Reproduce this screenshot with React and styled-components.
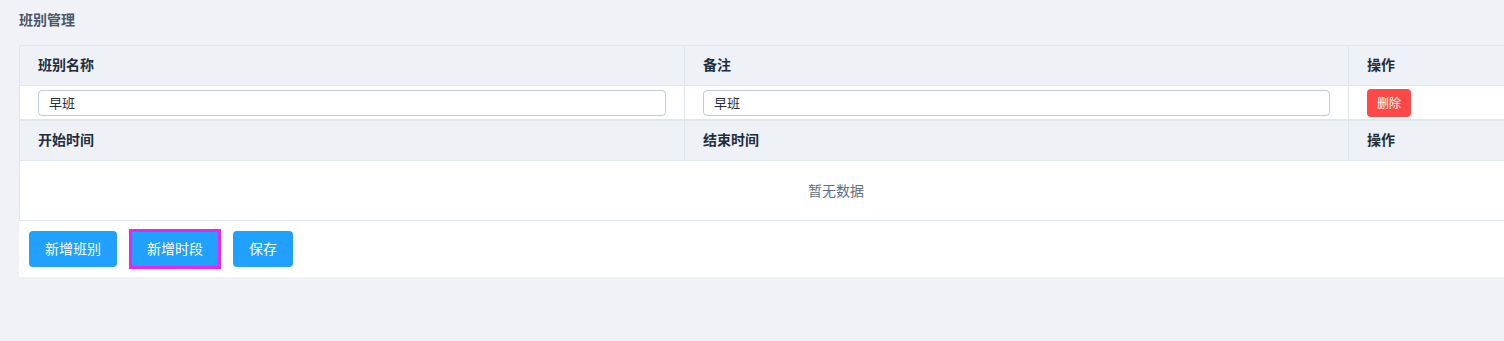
import React from "react"
import styled, { createGlobalStyle } from "styled-components"

const GlobalStyle = createGlobalStyle`
  html, body {
    margin: 0;
    padding: 0;
    background: #f0f2f7;
    overflow: hidden;
  }
  body {
    font-family: "Liberation Sans", "Noto Sans CJK SC", sans-serif;
    color: #1f2d3d;
  }
`

const Page = styled.div`
  padding: 10px 0 0 19px;
  min-height: 331px;
`

const Title = styled.div`
  font-size: 14px;
  font-weight: 700;
  line-height: 20px;
  color: #48576a;
  margin-bottom: 15px;
`

const Sheet = styled.div`
  width: 1634px;
`

const Table = styled.div`
  border-top: 1px solid #dfe6ec;
  border-left: 1px solid #dfe6ec;
  background: #fff;
`

const Row = styled.div`
  display: grid;
  grid-template-columns: 665px 664px 1fr;
  height: ${props => (props.head ? "39px" : "33px")};
  background: ${props => (props.head ? "#eef1f6" : "#fff")};
  border-bottom: 1px solid #dfe6ec;
`

const Cell = styled.div`
  display: flex;
  align-items: center;
  padding: 0 18px ${props => (props.head ? "3px" : "0")};
  border-right: 1px solid #dfe6ec;
  font-size: 14px;
  font-weight: ${props => (props.head ? 700 : 400)};
  color: #1f2d3d;
  min-width: 0;
`

const TextInput = styled.input`
  box-sizing: border-box;
  width: 100%;
  height: 26px;
  border: 1px solid #bfcbd9;
  border-radius: 4px;
  padding: 0 10px 1px;
  font-family: inherit;
  font-size: 13px;
  color: #1f2d3d;
  background: #fff;
  outline: none;
`

const DangerButton = styled.button`
  height: 28px;
  padding: 0 10px 1px;
  border: none;
  border-radius: 4px;
  background: #ff4949;
  color: #fff;
  font-family: inherit;
  font-size: 12px;
  cursor: pointer;
`

const Empty = styled.div`
  height: 60px;
  box-sizing: border-box;
  padding-bottom: 2px;
  display: flex;
  align-items: center;
  justify-content: center;
  border-bottom: 1px solid #dfe6ec;
  border-right: 1px solid #dfe6ec;
  font-size: 14px;
  color: #5e6d82;
  background: #fff;
`

const Footer = styled.div`
  display: flex;
  gap: 14px;
  padding: 10px 10px;
  background: #fff;
`

const Button = styled.button`
  height: 36px;
  padding: 0 16px 2px;
  border: none;
  border-radius: ${props => (props.focused ? "0" : "4px")};
  background: #20a0ff;
  color: #fff;
  font-family: inherit;
  font-size: 14px;
  cursor: pointer;
  outline: ${props => (props.focused ? "3px solid #f020f0" : "none")};
  outline-offset: -1px;
`

const App = () => {
  return (
    <Page>
      <GlobalStyle />
      <Title>班别管理</Title>
      <Sheet>
        <Table>
          <Row head>
            <Cell head>班别名称</Cell>
            <Cell head>备注</Cell>
            <Cell head>操作</Cell>
          </Row>
          <Row>
            <Cell>
              <TextInput defaultValue="早班" />
            </Cell>
            <Cell>
              <TextInput defaultValue="早班" />
            </Cell>
            <Cell>
              <DangerButton>删除</DangerButton>
            </Cell>
          </Row>
        </Table>
        <Table>
          <Row head>
            <Cell head>开始时间</Cell>
            <Cell head>结束时间</Cell>
            <Cell head>操作</Cell>
          </Row>
          <Empty>暂无数据</Empty>
        </Table>
        <Footer>
          <Button>新增班别</Button>
          <Button focused>新增时段</Button>
          <Button>保存</Button>
        </Footer>
      </Sheet>
    </Page>
  )
}

export default App
